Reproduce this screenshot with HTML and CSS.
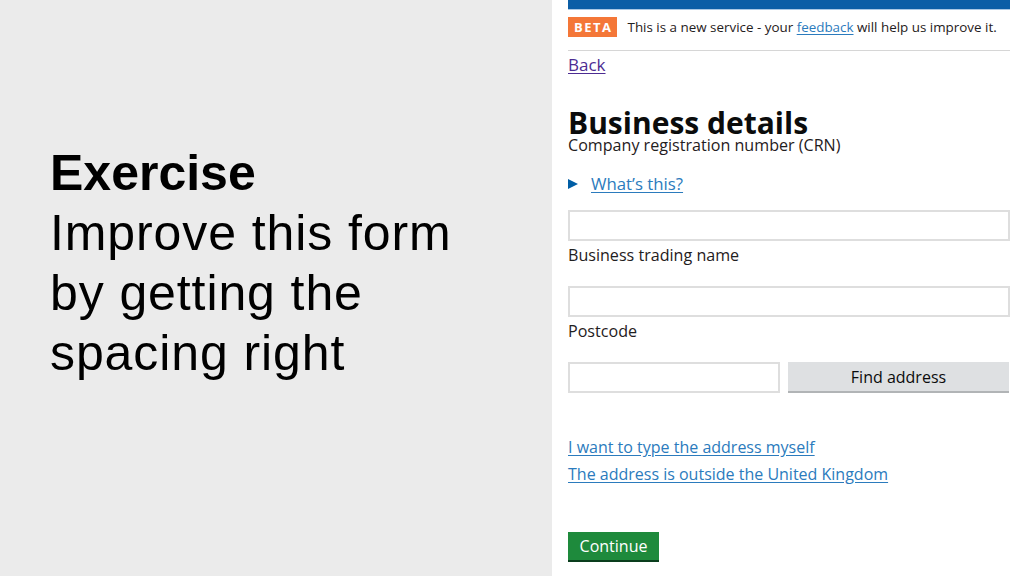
FILE: index.html
```
<!DOCTYPE html>
<html>
<head>
<meta charset="utf-8">
<link rel="stylesheet" href="styles.css">
</head>
<body>
<div class="slide">
  <section class="brief">
    <h1>Exercise</h1>
    <p>Improve this form<br>by getting the<br>spacing right</p>
  </section>

  <section class="phone">
    <div class="topbar"></div>
    <div class="phase">
      <strong class="tag">BETA</strong>
      <span>This is a new service - your <a href="#">feedback</a> will help us improve it.</span>
    </div>
    <a class="back" href="#">Back</a>

    <h2>Business details</h2>
    <label class="label crn" for="crn">Company registration number (CRN)</label>
    <div class="details">
      <svg width="10" height="10" viewBox="0 0 10 10"><polygon points="0,0 10,5 0,10" fill="#005ea5"/></svg>
      <a href="#">What’s this?</a>
    </div>
    <input class="field first" id="crn" type="text">

    <label class="label" for="name">Business trading name</label>
    <input class="field" id="name" type="text">

    <label class="label" for="postcode">Postcode</label>
    <div class="lookup">
      <input class="field short" id="postcode" type="text">
      <button class="btn grey" type="button">Find address</button>
    </div>

    <div class="alt-links">
      <a href="#">I want to type the address myself</a>
      <a href="#">The address is outside the United Kingdom</a>
    </div>

    <button class="btn green" type="button">Continue</button>
  </section>
</div>
</body>
</html>
```

FILE: styles.css
```
body {
  margin: 0;
  font-family: "Liberation Sans", Arial, sans-serif;
}

.slide {
  display: grid;
  grid-template-columns: 552px 1fr;
  height: 576px;
  overflow: hidden;
}

/* left side: the brief */
.brief {
  background-color: #ebebeb;
  color: #000;
  padding: 143px 0 0 50px;
}
.brief h1,
.brief p {
  margin: 0;
  font-size: 50px;
  line-height: 60px;
}
.brief p {
  letter-spacing: 0.9px;
}

/* right side: the form */
.phone {
  background-color: #fff;
  padding: 0 14px 0 16px;
  font-family: "Open Sans", sans-serif;
  font-size: 16.1px;
  color: #1f2021;
  display: flex;
  flex-direction: column;
  align-items: flex-start;
}
.phone a {
  color: #2b7bbd;
  text-decoration: underline;
  text-underline-offset: 2px;
}

.topbar {
  align-self: stretch;
  height: 9px;
  background-color: #0b5ea6;
  border-bottom: 1px solid #a9c8e4;
}

.phase {
  align-self: stretch;
  display: flex;
  align-items: center;
  gap: 11px;
  padding: 7px 0 13px;
  border-bottom: 1px solid #d6d6d6;
  font-size: 13.4px;
  line-height: 20px;
}
.tag {
  background-color: #f47738;
  color: #fff;
  font-size: 13px;
  letter-spacing: 1.5px;
  padding: 0 4px 0 6px;
  line-height: 20px;
}

.phone a.back {
  color: #4c2c92;
  font-size: 17px;
  line-height: 20px;
  margin-top: 4px;
}

h2 {
  margin: 35px 0 0;
  font-size: 30px;
  line-height: 25px;
  color: #0b0c0c;
}

.label {
  display: block;
  line-height: 20px;
  margin-top: 4px;
}
.label.crn {
  margin-top: 0;
}

.details {
  display: flex;
  align-items: center;
  gap: 13px;
  margin-top: 19px;
  font-size: 16.8px;
  line-height: 20px;
}

.field {
  box-sizing: border-box;
  width: 442px;
  height: 31px;
  border: 2px solid #dedede;
  margin: 21px 0 0;
  padding: 4px;
  font: inherit;
}
.field.first {
  margin-top: 16px;
}

.lookup {
  display: flex;
  gap: 8px;
  margin-top: 21px;
}
.lookup .field {
  margin: 0;
}
.field.short {
  width: 212px;
}

.btn {
  border: 0;
  font-family: inherit;
  font-size: 16px;
  height: 29px;
  padding: 0 12px;
}
.grey {
  width: 221px;
  background-color: #dee0e2;
  color: #0b0c0c;
  box-shadow: 0 2px 0 #b1b4b6;
}
.green {
  margin-top: 48px;
  height: 28px;
  width: 91px;
  padding: 0;
  background-color: #1e8a3c;
  color: #fff;
  box-shadow: 0 2px 0 #0a3e1d;
}

.alt-links {
  display: flex;
  flex-direction: column;
  gap: 7px;
  margin-top: 44px;
  font-size: 16px;
  line-height: 20px;
}
```
